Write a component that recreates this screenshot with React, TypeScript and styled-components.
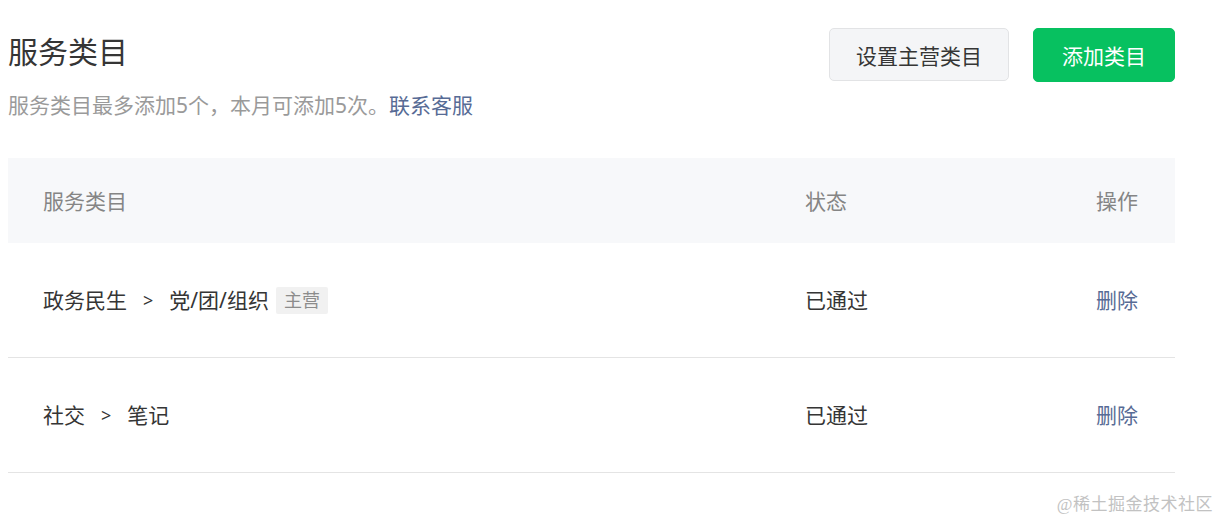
import React from "react";
import styled, { createGlobalStyle } from "styled-components";

const Global = createGlobalStyle`
  html, body { margin: 0; padding: 0; background: #fff; }
  body { font-family: "Noto Sans", "Noto Sans CJK SC", sans-serif; }
`;

const Page = styled.div`
  position: relative;
  width: 1219px;
  height: 523px;
  box-sizing: border-box;
  padding: 28px 0 0 8px;
  overflow: hidden;
`;

const Main = styled.div`
  width: 1167px;
`;

const Head = styled.div`
  display: flex;
  justify-content: space-between;
  align-items: flex-start;
`;

const Title = styled.h1`
  margin: 0;
  font-size: 30px;
  line-height: 48px;
  font-weight: 400;
  color: #353535;
`;

const Desc = styled.p`
  margin: 15px 0 0;
  font-size: 21px;
  line-height: 28px;
  color: #9a9a9a;
`;

const Link = styled.a`
  color: #576b95;
  text-decoration: none;
  cursor: pointer;
`;

const Actions = styled.div`
  display: flex;
  gap: 24px;
`;

const Button = styled.button<{ $primary?: boolean }>`
  height: ${(p) => (p.$primary ? "54px" : "53px")};
  padding: 0 ${(p) => (p.$primary ? "28px" : "26px")};
  border-radius: 5px;
  font-family: inherit;
  font-size: 21px;
  border: 1px solid ${(p) => (p.$primary ? "#07c160" : "#e2e3e5")};
  background: ${(p) => (p.$primary ? "#07c160" : "#f4f5f7")};
  color: ${(p) => (p.$primary ? "#fff" : "#353535")};
  cursor: pointer;
`;

const Table = styled.div`
  margin-top: 39px;
`;

const Row = styled.div<{ $head?: boolean }>`
  display: grid;
  grid-template-columns: 1fr 233px 100px;
  align-items: center;
  padding: 0 37px 0 35px;
  height: ${(p) => (p.$head ? "85px" : "114px")};
  background: ${(p) => (p.$head ? "#f7f8fa" : "#fff")};
  border-bottom: ${(p) => (p.$head ? "none" : "1px solid #e4e4e4")};
  color: ${(p) => (p.$head ? "#858585" : "#353535")};
  font-size: 21px;
  line-height: 28px;
`;

const Cell = styled.div<{ $right?: boolean }>`
  display: flex;
  align-items: center;
  justify-content: ${(p) => (p.$right ? "flex-end" : "flex-start")};
`;

const Sep = styled.span`
  margin: 0 16px;
  font-size: 18px;
`;

const Tag = styled.span`
  margin-left: 7px;
  padding: 0 8px;
  height: 27px;
  line-height: 27px;
  font-size: 18px;
  background: #f1f1f1;
  color: #8c8c8c;
  border-radius: 2px;
`;

const Op = styled.a`
  color: #576b95;
  cursor: pointer;
`;

const Watermark = styled.div`
  position: absolute;
  right: 6px;
  bottom: 8px;
  font-family: "Liberation Serif", "Noto Sans CJK SC", serif;
  font-size: 17px;
  color: #c2c2c2;
  letter-spacing: 0.5px;
`;

const rows = [
  { path: ["政务民生", "党/团/组织"], main: true, status: "已通过" },
  { path: ["社交", "笔记"], main: false, status: "已通过" },
];

export default function App() {
  return (
    <Page>
      <Global />
      <Main>
        <Head>
          <div>
            <Title>服务类目</Title>
            <Desc>
              服务类目最多添加5个，本月可添加5次。<Link>联系客服</Link>
            </Desc>
          </div>
          <Actions>
            <Button>设置主营类目</Button>
            <Button $primary>添加类目</Button>
          </Actions>
        </Head>
        <Table>
          <Row $head>
            <Cell>服务类目</Cell>
            <Cell>状态</Cell>
            <Cell $right>操作</Cell>
          </Row>
          {rows.map((r, i) => (
            <Row key={i}>
              <Cell>
                {r.path[0]}
                <Sep>&gt;</Sep>
                {r.path[1]}
                {r.main && <Tag>主营</Tag>}
              </Cell>
              <Cell>{r.status}</Cell>
              <Cell $right>
                <Op>删除</Op>
              </Cell>
            </Row>
          ))}
        </Table>
      </Main>
      <Watermark>@稀土掘金技术社区</Watermark>
    </Page>
  );
}
